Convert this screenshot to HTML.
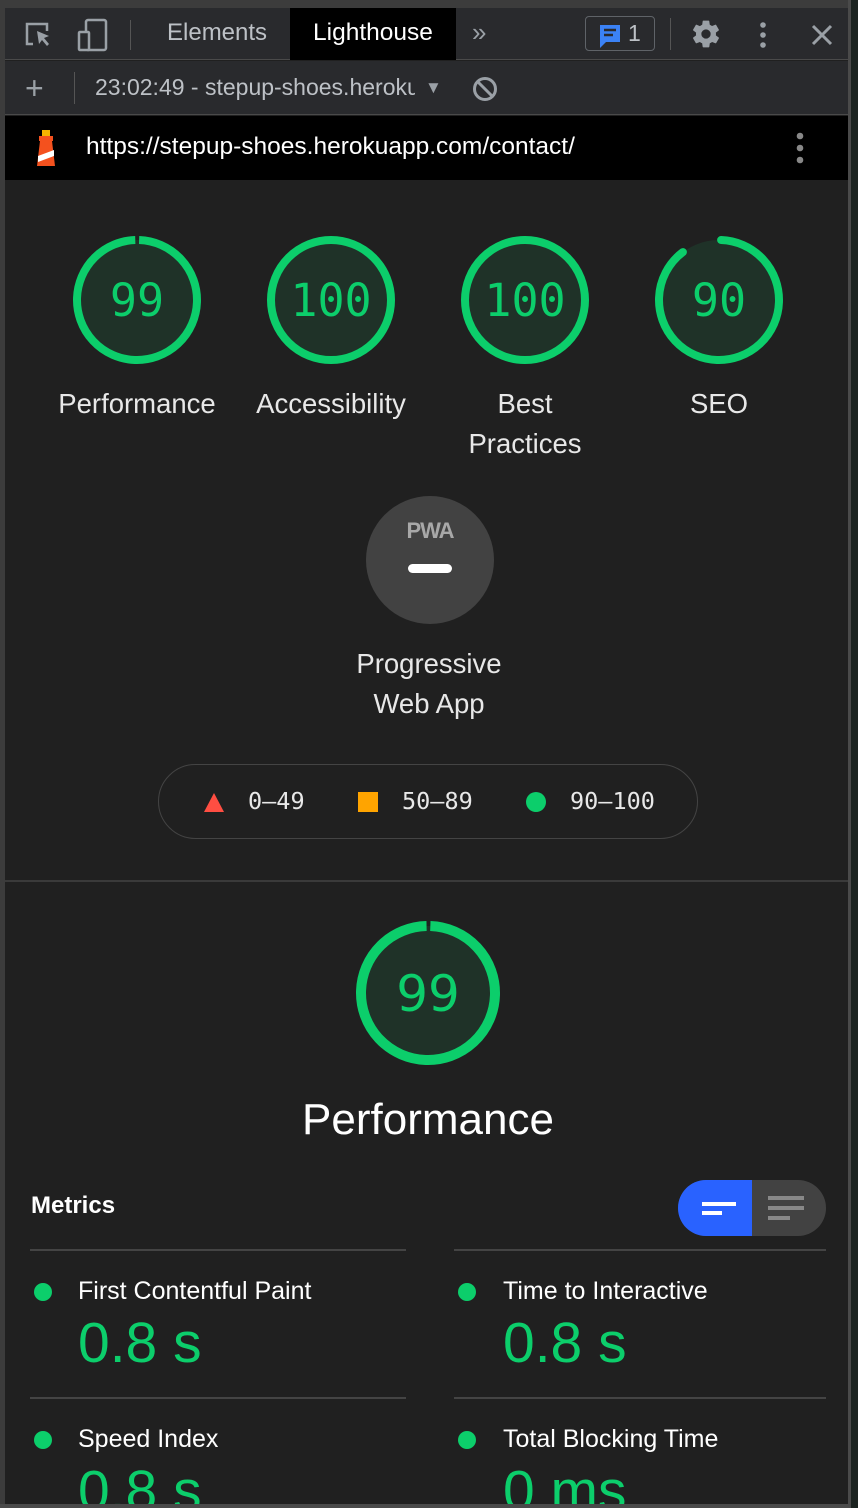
<!DOCTYPE html>
<html><head><meta charset="utf-8"><style>
*{margin:0;padding:0;box-sizing:border-box}
html,body{width:858px;height:1508px;overflow:hidden;background:#1b2320;font-family:"Liberation Sans",sans-serif}
#win{position:absolute;left:0;top:0;width:851px;height:1508px;background:#202020;border-right:3px solid #4a4a4a;overflow:hidden}
.abs{position:absolute;white-space:nowrap}
.mono{font-family:"DejaVu Sans Mono","Liberation Mono",monospace}
.lbl{color:#e8e8e8;font-size:27.5px;text-align:center;line-height:40px}
.mv{color:#0cce6b;font-size:57px}
.ml{color:#fff;font-size:25px}
</style></head><body>
<div id="win">
 <div class="abs" style="left:0;top:0;width:851px;height:8px;background:#3c3c3c"></div>
 <div class="abs" style="left:0;top:0;width:5px;height:1508px;background:#3c3c3c"></div>
 <div class="abs" style="left:5px;top:8px;width:843px;height:52px;background:#292a2d;border-bottom:1px solid #4a4a4a"></div>
 <svg class="abs" style="left:24px;top:20px" width="30" height="30" viewBox="0 0 30 30"><path d="M9 24H3V4h20v7" fill="none" stroke="#9aa0a6" stroke-width="2.5"/><path d="M13 11l12 5-5 2 5 6-2 2-5-6-3 4z" fill="#9aa0a6"/></svg>
 <svg class="abs" style="left:76px;top:18px" width="34" height="34" viewBox="0 0 34 34"><rect x="10" y="2" width="20" height="30" rx="2" fill="none" stroke="#9aa0a6" stroke-width="2.5"/><rect x="3" y="14" width="10" height="18" rx="1" fill="#292a2d" stroke="#9aa0a6" stroke-width="2.5"/></svg>
 <div class="abs" style="left:130px;top:20px;width:1px;height:30px;background:#555"></div>
 <div class="abs" style="left:167px;top:19px;color:#bdc1c6;font-size:24px">Elements</div>
 <div class="abs" style="left:290px;top:8px;width:166px;height:52px;background:#000"></div>
 <div class="abs" style="left:313px;top:19px;color:#fff;font-size:24.5px">Lighthouse</div>
 <div class="abs" style="left:472px;top:17px;color:#9aa0a6;font-size:26px">»</div>
 <div class="abs" style="left:585px;top:16px;width:70px;height:35px;border:1.5px solid #5f6368;border-radius:4px"></div>
 <svg class="abs" style="left:597px;top:22px" width="26" height="28" viewBox="0 0 26 28"><path d="M3 3h20v17H9l-6 6z" fill="#3b82f6"/><path d="M7 8h12M7 13h9" stroke="#292a2d" stroke-width="2.5"/></svg>
 <div class="abs" style="left:628px;top:20px;color:#bdc1c6;font-size:23px">1</div>
 <div class="abs" style="left:670px;top:18px;width:1px;height:32px;background:#555"></div>
 <svg class="abs" style="left:690px;top:18px" width="32" height="32" viewBox="0 0 24 24"><path fill="#9aa0a6" d="M19.4 13c.04-.3.06-.6.06-1s-.02-.7-.06-1l2.1-1.650c.2-.15.24-.42.12-.64l-2-3.460c-.12-.22-.39-.3-.61-.22l-2.490 1c-.52-.4-1.080-.73-1.690-.98l-.38-2.650A.49.49 0 0 0 14 2h-4c-.25 0-.46.18-.49.42l-.38 2.650c-.61.25-1.170.59-1.690.98l-2.490-1c-.23-.09-.49 0-.61.22l-2 3.460c-.13.22-.07.49.12.64L4.570 11c-.04.32-.07.65-.07 1s.02.68.06 1l-2.100 1.650c-.2.15-.25.42-.13.64l2 3.460c.12.22.39.3.61.22l2.490-1c.52.4 1.080.73 1.690.98l.38 2.650c.03.24.24.42.49.42h4c.25 0 .46-.18.49-.42l.38-2.650c.61-.25 1.170-.59 1.690-.98l2.490 1c.23.09.49 0 .61-.22l2-3.460c.12-.22.07-.49-.12-.64zM12 15.5a3.5 3.5 0 1 1 0-7 3.5 3.5 0 0 1 0 7z"/></svg>
 <svg class="abs" style="left:756px;top:20px" width="14" height="30"><circle cx="7" cy="5" r="2.8" fill="#9aa0a6"/><circle cx="7" cy="15" r="2.8" fill="#9aa0a6"/><circle cx="7" cy="25" r="2.8" fill="#9aa0a6"/></svg>
 <svg class="abs" style="left:810px;top:23px" width="24" height="24"><path d="M3 3l18 18M21 3L3 21" stroke="#9aa0a6" stroke-width="3"/></svg>
 <div class="abs" style="left:5px;top:61px;width:843px;height:54px;background:#292a2d;border-bottom:1px solid #4a4a4a"></div>
 <div class="abs" style="left:25px;top:70px;color:#9aa0a6;font-size:32px;line-height:36px">+</div>
 <div class="abs" style="left:74px;top:72px;width:1px;height:32px;background:#555"></div>
 <div class="abs" style="left:95px;top:74px;width:320px;overflow:hidden;color:#bdc1c6;font-size:23px">23:02:49 - stepup-shoes.herokuapp.com</div>
 <div class="abs" style="left:425px;top:78px;color:#9aa0a6;font-size:17px">▼</div>
 <svg class="abs" style="left:472px;top:76px" width="26" height="26"><circle cx="13" cy="13" r="10.5" fill="none" stroke="#9aa0a6" stroke-width="3"/><path d="M6 6l14 14" stroke="#9aa0a6" stroke-width="3"/></svg>
 <div class="abs" style="left:5px;top:116px;width:843px;height:64px;background:#000"></div>
 <svg class="abs" style="left:32px;top:128px" width="28" height="40" viewBox="0 0 28 40"><rect x="10" y="2" width="8" height="8" fill="#f4b400"/><rect x="7" y="8" width="14" height="5" fill="#f4511e"/><path d="M8 13h12l3 25H5z" fill="#f4511e"/><path d="M6 28l16-6v6L6 34z" fill="#fff"/></svg>
 <div class="abs" style="left:86px;top:133px;color:#fff;font-size:24.5px">https://stepup-shoes.herokuapp.com/contact/</div>
 <svg class="abs" style="left:793px;top:130px" width="14" height="36"><circle cx="7" cy="6" r="3.3" fill="#888"/><circle cx="7" cy="18" r="3.3" fill="#888"/><circle cx="7" cy="30" r="3.3" fill="#888"/></svg>

 <svg class="abs" style="left:0;top:180px" width="848" height="200">
  <g font-family="DejaVu Sans Mono,monospace" font-size="45" fill="#0cce6b" text-anchor="middle">
   <circle cx="137" cy="120" r="60" fill="#1f3228" stroke="#0cce6b" stroke-width="8" stroke-dasharray="373 377" transform="rotate(-88 137 120)"/>
   <text x="137" y="136">99</text>
   <circle cx="331" cy="120" r="60" fill="#1f3228" stroke="#0cce6b" stroke-width="8"/>
   <text x="331" y="136">100</text>
   <circle cx="525" cy="120" r="60" fill="#1f3228" stroke="#0cce6b" stroke-width="8"/>
   <text x="525" y="136">100</text>
   <circle cx="719" cy="120" r="60" fill="#1f3228"/>
   <circle cx="719" cy="120" r="60" fill="none" stroke="#0cce6b" stroke-width="8" stroke-linecap="round" stroke-dasharray="336 377" transform="rotate(-88 719 120)"/>
   <text x="719" y="136">90</text>
  </g>
 </svg>
 <div class="abs lbl" style="left:37px;top:384px;width:200px">Performance</div>
 <div class="abs lbl" style="left:231px;top:384px;width:200px">Accessibility</div>
 <div class="abs lbl" style="left:425px;top:384px;width:200px">Best<br>Practices</div>
 <div class="abs lbl" style="left:619px;top:384px;width:200px">SEO</div>
 <div class="abs" style="left:366px;top:496px;width:128px;height:128px;border-radius:50%;background:#424242"></div>
 <div class="abs" style="left:398px;top:518px;width:64px;text-align:center;color:#a8a8a8;font-weight:bold;font-size:22px;letter-spacing:-1px">PWA</div>
 <div class="abs" style="left:408px;top:564px;width:44px;height:9px;border-radius:5px;background:#fff"></div>
 <div class="abs lbl" style="left:329px;top:644px;width:200px">Progressive<br>Web App</div>
 <div class="abs" style="left:158px;top:764px;width:540px;height:75px;border:1.5px solid #444;border-radius:38px"></div>
 <svg class="abs" style="left:203px;top:791px" width="22" height="22"><path d="M11 2l10 19H1z" fill="#ff4e42"/></svg>
 <div class="abs mono" style="left:248px;top:787px;color:#e8e8e8;font-size:23.5px">0–49</div>
 <div class="abs" style="left:358px;top:792px;width:20px;height:20px;background:#ffa400"></div>
 <div class="abs mono" style="left:402px;top:787px;color:#e8e8e8;font-size:23.5px">50–89</div>
 <div class="abs" style="left:526px;top:792px;width:20px;height:20px;border-radius:50%;background:#0cce6b"></div>
 <div class="abs mono" style="left:570px;top:787px;color:#e8e8e8;font-size:23.5px">90–100</div>
 <div class="abs" style="left:5px;top:880px;width:843px;height:2px;background:#3a3a3a"></div>
 <svg class="abs" style="left:340px;top:910px" width="180" height="170">
  <circle cx="88" cy="83" r="67" fill="#1f3228" stroke="#0cce6b" stroke-width="10" stroke-dasharray="417 421" transform="rotate(-88 88 83)"/>
  <text x="88" y="101" text-anchor="middle" font-family="DejaVu Sans,sans-serif" font-size="50" fill="#0cce6b">99</text>
 </svg>
 <div class="abs" style="left:228px;top:1095px;width:400px;text-align:center;color:#fff;font-size:44px">Performance</div>
 <div class="abs" style="left:31px;top:1192px;color:#fff;font-size:24px;font-weight:bold">Metrics</div>
 <div class="abs" style="left:678px;top:1180px;width:148px;height:56px;border-radius:28px;background:#424242;overflow:hidden"><div style="width:74px;height:56px;background:#2962ff"></div></div>
 <div class="abs" style="left:702px;top:1202px;width:34px;height:4px;background:#fff"></div>
 <div class="abs" style="left:702px;top:1211px;width:20px;height:4px;background:#fff"></div>
 <div class="abs" style="left:768px;top:1196px;width:36px;height:4px;background:#888"></div>
 <div class="abs" style="left:768px;top:1206px;width:36px;height:4px;background:#888"></div>
 <div class="abs" style="left:768px;top:1216px;width:22px;height:4px;background:#888"></div>
 <div class="abs" style="left:30px;top:1249px;width:376px;height:2px;background:#444"></div>
 <div class="abs" style="left:454px;top:1249px;width:372px;height:2px;background:#444"></div>
 <div class="abs" style="left:30px;top:1397px;width:376px;height:2px;background:#444"></div>
 <div class="abs" style="left:454px;top:1397px;width:372px;height:2px;background:#444"></div>
 <div class="abs" style="left:34px;top:1283px;width:18px;height:18px;border-radius:50%;background:#0cce6b"></div>
 <div class="abs ml" style="left:78px;top:1277px">First Contentful Paint</div>
 <div class="abs mv" style="left:78px;top:1310px">0.8 s</div>
 <div class="abs" style="left:458px;top:1283px;width:18px;height:18px;border-radius:50%;background:#0cce6b"></div>
 <div class="abs ml" style="left:503px;top:1277px">Time to Interactive</div>
 <div class="abs mv" style="left:503px;top:1310px">0.8 s</div>
 <div class="abs" style="left:34px;top:1431px;width:18px;height:18px;border-radius:50%;background:#0cce6b"></div>
 <div class="abs ml" style="left:78px;top:1425px">Speed Index</div>
 <div class="abs mv" style="left:78px;top:1458px">0.8 s</div>
 <div class="abs" style="left:458px;top:1431px;width:18px;height:18px;border-radius:50%;background:#0cce6b"></div>
 <div class="abs ml" style="left:503px;top:1425px">Total Blocking Time</div>
 <div class="abs mv" style="left:503px;top:1458px">0 ms</div>
 <div class="abs" style="left:0;top:1504px;width:851px;height:4px;background:#4a4a4a"></div>
</div>
</body></html>
